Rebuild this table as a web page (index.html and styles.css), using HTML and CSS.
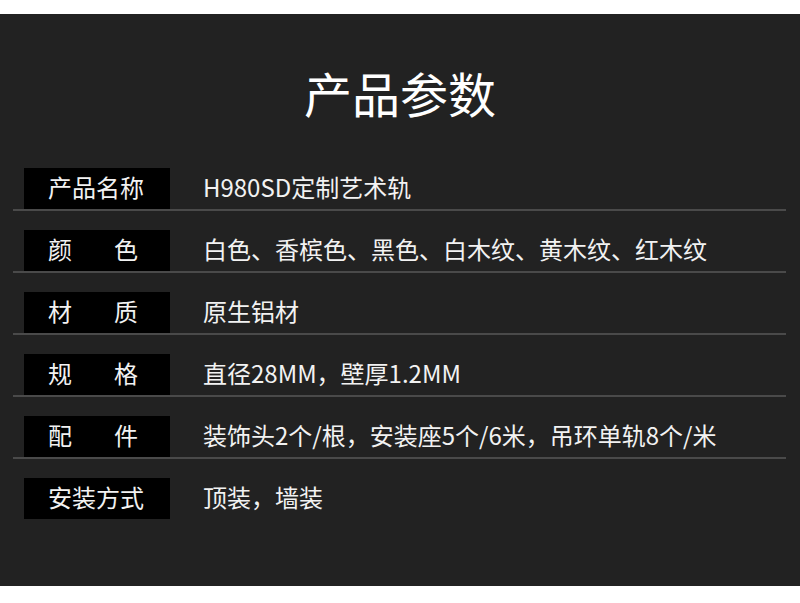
FILE: index.html
```html
<!DOCTYPE html>
<html lang="zh-CN">
<head>
  <meta charset="UTF-8" />
  <title>产品参数</title>
  <link rel="stylesheet" href="styles.css">
</head>
<body>
  <div class="panel">
    <h1>产品参数</h1>

    <div class="spec-list">
      <div class="spec-row">
        <div class="spec-label"><span>产品名称</span></div>
        <div class="spec-value">H980SD定制艺术轨</div>
      </div>
      <div class="spec-row">
        <div class="spec-label pair"><span>颜</span><span>色</span></div>
        <div class="spec-value">白色、香槟色、黑色、白木纹、黄木纹、红木纹</div>
      </div>
      <div class="spec-row">
        <div class="spec-label pair"><span>材</span><span>质</span></div>
        <div class="spec-value">原生铝材</div>
      </div>
      <div class="spec-row">
        <div class="spec-label pair"><span>规</span><span>格</span></div>
        <div class="spec-value">直径28MM，壁厚1.2MM</div>
      </div>
      <div class="spec-row">
        <div class="spec-label pair"><span>配</span><span>件</span></div>
        <div class="spec-value">装饰头2个/根，安装座5个/6米，吊环单轨8个/米</div>
      </div>
      <div class="spec-row last">
        <div class="spec-label"><span>安装方式</span></div>
        <div class="spec-value">顶装，墙装</div>
      </div>
    </div>
  </div>
</body>
</html>
```

FILE: styles.css
```css
body {
  margin: 0;
  background: #fff;
  font-family: "Noto Sans CJK SC", "Noto Sans", sans-serif;
  color: #fff;
}

.panel {
  margin-top: 14px;
  height: 572px;
  box-sizing: border-box;
  padding-top: 54px;
  background: #222222;
}

h1 {
  margin: 0;
  height: 48px;
  line-height: 48px;
  font-size: 48px;
  font-weight: 400;
  text-align: center;
}

.spec-list {
  margin-top: 52px;
}

.spec-row {
  display: flex;
  align-items: center;
  margin: 0 14px 19px 13px;
  padding-left: 11px;
  border-bottom: 2px solid #4a4a4a;
}

.spec-row.last {
  border-bottom-color: transparent;
}

.spec-label {
  display: flex;
  justify-content: space-between;
  width: 146px;
  height: 41px;
  box-sizing: border-box;
  padding: 0 23px 3px 24px;
  background: #000;
  font-size: 24px;
  line-height: 38px;
  color: #f2f2f2;
}

.spec-label.pair {
  padding-right: 32px;
}

.spec-value {
  margin-left: 33px;
  padding-bottom: 3px;
  font-size: 24px;
  line-height: 38px;
  color: #f2f2f2;
}
```
